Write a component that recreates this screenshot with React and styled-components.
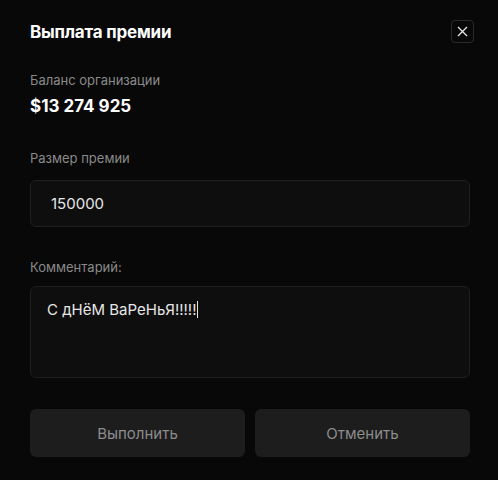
import React from "react";
import styled, { createGlobalStyle } from "styled-components";

const Global = createGlobalStyle`
  html, body {
    margin: 0;
    padding: 0;
    background: #080808;
  }
  body {
    font-family: "Inter", "Noto Sans", sans-serif;
    color: #ffffff;
  }
`;

const Modal = styled.div`
  width: 498px;
  height: 480px;
  box-sizing: border-box;
  padding: 20px 24px 0 30px;
  background: #080808;
  display: flex;
  flex-direction: column;
`;

const Header = styled.div`
  display: flex;
  align-items: center;
  justify-content: space-between;
  height: 23px;
`;

const Title = styled.h2`
  margin: 0;
  font-size: 17px;
  font-weight: 700;
  letter-spacing: -0.2px;
  color: #ffffff;
`;

const CloseButton = styled.button`
  width: 23px;
  height: 23px;
  padding: 0;
  display: flex;
  align-items: center;
  justify-content: center;
  background: transparent;
  border: 1px solid #2a2a2a;
  border-radius: 4px;
  color: #e8e8e8;
  cursor: pointer;
`;

const Label = styled.div`
  font-size: 13px;
  color: #8a8a8a;
  margin-top: ${({ $top }) => $top}px;
  line-height: 16px;
`;

const Balance = styled.div`
  margin-top: 8px;
  font-size: 17px;
  font-weight: 700;
  line-height: 20px;
  color: #ffffff;
`;

const Field = styled.div`
  margin-top: ${({ $top }) => $top}px;
  width: 440px;
  box-sizing: border-box;
  height: ${({ $h }) => $h}px;
  background: #0e0e0e;
  border: 1px solid #1f1f1f;
  border-radius: 6px;
  padding: ${({ $pad }) => $pad};
  font-size: 15px;
  color: #e6e6e6;
  display: flex;
  align-items: ${({ $center }) => ($center ? "center" : "flex-start")};
`;

const Caret = styled.span`
  display: inline-block;
  width: 1px;
  height: 17px;
  background: #e6e6e6;
  vertical-align: -3px;
`;

const Actions = styled.div`
  margin-top: 31px;
  width: 440px;
  display: grid;
  grid-template-columns: 1fr 1fr;
  gap: 10px;
`;

const Action = styled.button`
  height: 48px;
  border: none;
  border-radius: 6px;
  background: #1d1d1d;
  color: #8c8c8c;
  font-family: inherit;
  font-size: 15px;
  cursor: pointer;
`;

export default function App() {
  return (
    <>
      <Global />
      <Modal>
        <Header>
          <Title>Выплата премии</Title>
          <CloseButton aria-label="Закрыть">
            <svg width="11" height="11" viewBox="0 0 11 11" fill="none">
              <path d="M1 1L10 10M10 1L1 10" stroke="currentColor" strokeWidth="1.3" />
            </svg>
          </CloseButton>
        </Header>
        <Label $top={29}>Баланс организации</Label>
        <Balance>$13 274 925</Balance>
        <Label $top={34}>Размер премии</Label>
        <Field $top={14} $h={47} $pad="0 20px" $center>150000</Field>
        <Label $top={32}>Комментарий:</Label>
        <Field $top={11} $h={92} $pad="13px 16px">
          <span>
            С дНёМ ВаРеНьЯ!!!!!<Caret />
          </span>
        </Field>
        <Actions>
          <Action>Выполнить</Action>
          <Action>Отменить</Action>
        </Actions>
      </Modal>
    </>
  );
}
